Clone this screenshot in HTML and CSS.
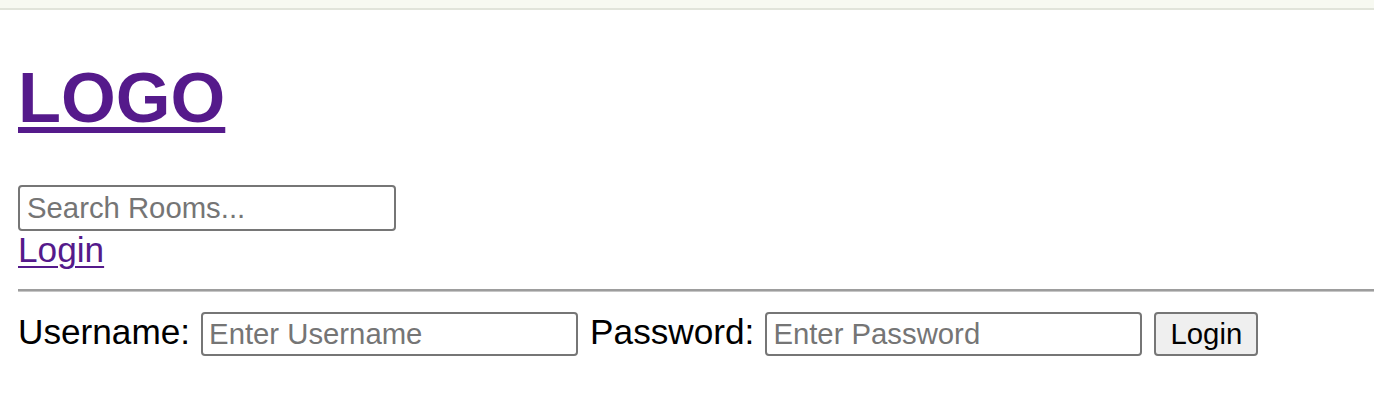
FILE: index.html
```html
<!DOCTYPE html>
<html lang="en">
<head>
<meta charset="utf-8">
<title>Rooms</title>
<link rel="stylesheet" href="styles.css">
</head>
<body>
<div class="topbar"></div>
<div class="page">
  <header class="header">
    <h1 class="logo"><a href="#">LOGO</a></h1>
    <input class="search" type="text" placeholder="Search Rooms...">
    <a class="login-link" href="#">Login</a>
  </header>
  <hr class="rule">
  <form class="login-form">
    <label class="label" for="u">Username:</label>
    <input class="field" id="u" type="text" placeholder="Enter Username">
    <label class="label" for="p">Password:</label>
    <input class="field" id="p" type="password" placeholder="Enter Password">
    <button class="btn" type="button">Login</button>
  </form>
</div>
</body>
</html>
```

FILE: styles.css
```css
html, body {
  margin: 0;
  padding: 0;
  background: #ffffff;
}
body {
  font-family: "Liberation Sans", Arial, sans-serif;
  font-size: 35.2px;
  color: #000;
  overflow: hidden;
}
.topbar {
  height: 8px;
  background: #f7f9f1;
  border-bottom: 2px solid #e1e4da;
}
.page {
  padding-left: 18px;
}
.header {
  display: flex;
  flex-direction: column;
  align-items: flex-start;
}
.logo {
  margin: 48px 0 47px 0;
  font-size: 70.4px;
  font-weight: bold;
  line-height: 80px;
}
.logo a {
  color: #551a8b;
  text-decoration: underline;
  text-decoration-thickness: 6px;
  text-underline-offset: 5px;
}
.search {
  box-sizing: border-box;
  width: 378px;
  height: 46px;
  margin: 0;
  padding: 0 7px;
  border: 2px solid #767676;
  border-radius: 4px;
  font-family: "Liberation Sans", Arial, sans-serif;
  font-size: 29.3px;
  color: #000;
  outline: none;
}
.search::placeholder,
.field::placeholder {
  color: #757575;
  opacity: 1;
}
.login-link {
  display: block;
  line-height: 38px;
  color: #551a8b;
  text-decoration: underline;
  text-decoration-thickness: 2px;
  text-underline-offset: 4px;
}
.rule {
  margin: 20px 0 0 0;
  height: 0;
  border: 0;
  border-top: 2px solid #9d9d9d;
  border-bottom: 1px solid #c6c6c6;
}
.login-form {
  display: flex;
  align-items: baseline;
  gap: 11px;
  margin: 20px 0 0 0;
}
.label {
  line-height: 40px;
}
.field {
  box-sizing: border-box;
  width: 377px;
  height: 44px;
  margin: 0 1px 0 0;
  padding: 0 6px;
  border: 2px solid #767676;
  border-radius: 4px;
  font-family: "Liberation Sans", Arial, sans-serif;
  font-size: 29.3px;
  color: #000;
  outline: none;
}
.btn {
  box-sizing: border-box;
  width: 104px;
  height: 44px;
  margin: 0;
  padding: 0;
  background: #efefef;
  border: 2px solid #767676;
  border-radius: 4px;
  font-family: "Liberation Sans", Arial, sans-serif;
  font-size: 29.3px;
  color: #000;
}
```
